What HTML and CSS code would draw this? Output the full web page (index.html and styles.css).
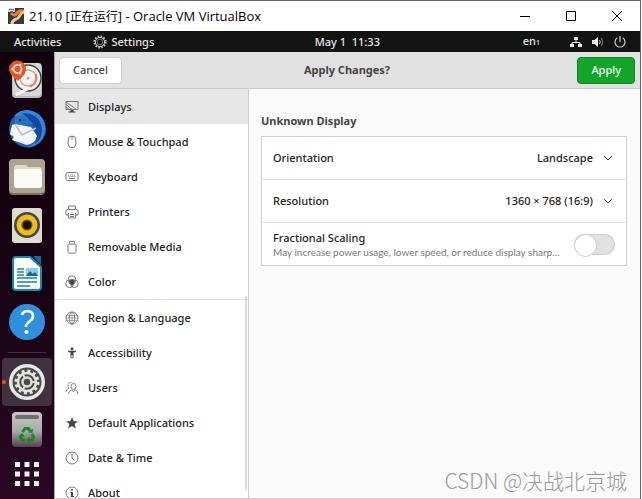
FILE: index.html
```html
<!DOCTYPE html>
<html lang="en">
<head>
<meta charset="utf-8">
<meta name="viewport" content="width=device-width, initial-scale=1">
<title>21.10 [正在运行] - Oracle VM VirtualBox</title>
<link rel="stylesheet" href="styles.css">
</head>
<body>
<div class="window">
  <header class="titlebar">
    <svg class="vm-icon" viewBox="0 0 16 16" aria-hidden="true"><path fill="#343746" d="M0 0h16v16H0z"/><path fill="#d9dbe0" d="M0 0h7v4H0z"/><path stroke="#777" d="M1 1.500h5M2 3.500h3"/><path fill="none" stroke="#ee7b32" stroke-width="3" d="M3 5c4 4 5 1 7-1 2-2 4-1 6-1"/><path fill="none" stroke="#ffc66b" stroke-width="3" d="M4 16c0-5 4-4 6-6s2-5 6-6"/></svg>
    <span class="title">21.10 [<span lang="zh">正在运行</span>] - Oracle VM VirtualBox</span>
    <div class="controls">
      <button type="button" aria-label="Minimize"><svg viewBox="0 0 12 12"><path d="M1 6.500h10"/></svg></button>
      <button type="button" aria-label="Maximize"><svg viewBox="0 0 12 12"><path d="M1.500 1.500h9v9h-9z"/></svg></button>
      <button type="button" aria-label="Close"><svg viewBox="0 0 12 12"><path d="M1 1l10 10M11 1L1 11"/></svg></button>
    </div>
  </header>

  <div class="topbar">
    <div class="top-left">
      <span>Activities</span>
      <span class="app-name"><svg class="gear" viewBox="0 0 14 14" aria-hidden="true"><circle cx="7" cy="7" r="5.600" stroke-width="2" stroke-dasharray="1.500 1.430"/><circle cx="7" cy="7" r="4.600"/><circle cx="7" cy="7" r="2.800" stroke="#777"/></svg>Settings</span>
    </div>
    <span>May 1&nbsp; 11:33</span>
    <div class="top-right">
      <span class="lang">en<small>1</small></span>
      <svg viewBox="0 0 12 12" aria-hidden="true"><path fill="#eee" d="M4 1h4v3H4zM0 8h4v3H0zM8 8h4v3H8z"/><path fill="none" stroke="#eee" d="M6 4v2M2 8V6.500h8V8"/></svg>
      <svg viewBox="0 0 12 12" aria-hidden="true"><path fill="#eee" d="M0 4h2.500L6 1v10L2.500 8H0z"/><path fill="none" stroke="#ccc" d="M7.500 4q1.500 2 0 4"/><path fill="none" stroke="#888" d="M9.500 2q2.500 4 0 8"/></svg>
      <svg viewBox="0 0 12 12" aria-hidden="true"><path fill="none" stroke="#ccc" stroke-width="1.200" d="M3.300 1.800a5 5 0 1 0 5.400 0M6 0v6"/></svg>
    </div>
  </div>

  <div class="desktop">
    <nav class="dock" aria-label="Dock">
      <a href="#" aria-label="Install Ubuntu"><svg viewBox="0 0 48 48"><rect x="10" y="7" width="30" height="35" rx="4" fill="#bdbdbd"/><rect x="11" y="7" width="28" height="33" rx="4" fill="#d6d6d6"/><circle cx="26" cy="22" r="13" fill="#f3f3f3" stroke="#444" stroke-width="1.500"/><circle cx="26" cy="22" r="8" fill="none" stroke="#d9a690" stroke-width="1.500"/><path d="M34 18q2 10-7 13" fill="none" stroke="#e58060" stroke-width="2"/><circle cx="26" cy="22" r="1.500" fill="#aaa"/><path d="M15 38l12-6" stroke="#fff" stroke-width="3" stroke-linecap="round"/><path d="M16 25C12 21 7 18 7 13a8.500 8.500 0 0 1 17 0c0 5-4 8-8 12z" fill="#e95420"/><circle cx="15.500" cy="13" r="4" fill="none" stroke="#fff" stroke-width="1.700"/><g fill="#fff" stroke="#e95420" stroke-width=".6"><circle cx="10.500" cy="13" r="1.600"/><circle cx="18" cy="8.800" r="1.600"/><circle cx="18" cy="17.200" r="1.600"/></g></svg></a>
      <a href="#" aria-label="Thunderbird"><svg viewBox="0 0 48 48"><circle cx="25.500" cy="24" r="18.500" fill="#1b5fad"/><path d="M12 11q5-6 13-6 18 2 18 20-2 15-17 18 12-8 9-22-6-10-17-9z" fill="#2e8bdc"/><path d="M20 8q19 0 20 17 0 9-7 14 4-17-7-25z" fill="#1748a1"/><path d="M13 12q6-4 12 0l6 7-18 3z" fill="#2673c8"/><path d="M10 20l3-1 16 3 6 9q-2 8-10 9L10 35l2-3-4-3z" fill="#f5f6f9"/><path d="M13 19l7 11 14-7" fill="none" stroke="#b8bdca" stroke-width="1.500"/><circle cx="18" cy="15" r="1.200" fill="#422"/></svg></a>
      <a href="#" aria-label="Files"><svg viewBox="0 0 48 48"><rect x="7" y="7" width="36" height="35" rx="4" fill="#777361"/><rect x="7" y="6" width="36" height="34" rx="4" fill="#aaa491"/><path d="M12 15q0-3 3-3h8q2 0 3 2h11q3 0 3 3v15q0 3-3 3H15q-3 0-3-3z" fill="#dfdace"/><rect x="12" y="16" width="28" height="19" rx="3" fill="#fbfaf6"/></svg></a>
      <a href="#" aria-label="Rhythmbox"><svg viewBox="0 0 48 48"><rect x="10" y="6" width="30" height="35" rx="3" fill="#dfdccf"/><circle cx="25" cy="23" r="13" fill="#45484a"/><circle cx="25" cy="23" r="10.500" fill="#f3bb16"/><circle cx="25" cy="23" r="5.500" fill="#64501a"/><circle cx="25" cy="23" r="4" fill="#111"/></svg></a>
      <a href="#" aria-label="LibreOffice Writer"><svg viewBox="0 0 48 48"><path d="M14 7h14l11 10v20q0 3-3 3H14q-3 0-3-3V10q0-3 3-3z" fill="#fff" stroke="#1786bd" stroke-width="2"/><path d="M31 6h8v9z" fill="#116c9d"/><path d="M15 19h7M15 22h7M15 25h7M15 28h20M15 32h20M15 36h13" stroke="#1c7dac" stroke-width="1.500"/><rect x="24" y="18" width="12" height="8" fill="#8acbea"/><path d="M24 26l4-5 3 3 2-2 3 4z" fill="#16679c"/></svg></a>
      <a href="#" aria-label="Help"><svg viewBox="0 0 48 48"><circle cx="25" cy="23" r="18" fill="#2d8fdd"/><path d="M20 16q1-4 6-4 5 1 5 5 0 3-3 5-4 3-4 6" fill="none" stroke="#fff" stroke-width="2.700"/><circle cx="24.500" cy="33" r="2" fill="#fff"/></svg></a>
      <hr>
      <a href="#" class="active" aria-label="Settings"><svg viewBox="0 0 48 48"><circle cx="25" cy="24" r="18" fill="#e8e8e6"/><circle cx="25" cy="24" r="14.500" fill="#4b4b4a"/><circle cx="25" cy="24" r="10.500" fill="none" stroke="#e4e4e2" stroke-width="4" stroke-dasharray="2.800 2.700"/><circle cx="25" cy="24" r="9" fill="#4b4b4a" stroke="#e4e4e2" stroke-width="2.500"/><circle cx="25" cy="24" r="4.500" fill="none" stroke="#deded9" stroke-width="2.500"/><path d="M29 24h6M23 20l-3-5M23 28l-3 5" stroke="#deded9" stroke-width="2"/></svg></a>
      <a href="#" aria-label="Trash"><svg viewBox="0 0 48 48"><defs><linearGradient id="bin" x2="0" y2="1"><stop stop-color="#c8c8c8"/><stop offset=".55" stop-color="#a9a9a9"/><stop offset="1" stop-color="#51434f"/></linearGradient></defs><rect x="10" y="6" width="30" height="35" rx="4" fill="url(#bin)"/><rect x="13" y="9" width="24" height="4" rx="2" fill="#6e6e6e"/><g fill="none" stroke="#168b1d" stroke-width="3"><path d="M20.500 26l2.500-3.500h3.500l1.500 2.500"/><path d="M30 28l1.500 3-1.500 3h-3.500"/><path d="M23 34h-3l-1.500-3 1-2"/></g><path d="M26 26.500l4.500.5.500-4.500zM27.500 31v6l-3.500-3zM17 29.500l3.500-2.500 2 4z" fill="#168b1d"/></svg></a>
      <a href="#" class="apps" aria-label="Show applications"><svg viewBox="0 0 48 48"><path fill="#f5f3f5" d="M13 12h5v5h-5zM22.500 12h5v5h-5zM32 12h5v5h-5zM13 21.500h5v5h-5zM22.500 21.500h5v5h-5zM32 21.500h5v5h-5zM13 31h5v5h-5zM22.500 31h5v5h-5zM32 31h5v5h-5z"/></svg></a>
    </nav>

    <main class="settings">
      <div class="headerbar">
        <button type="button" class="btn">Cancel</button>
        <h1>Apply Changes?</h1>
        <button type="button" class="btn apply">Apply</button>
      </div>
      <div class="body">
        <nav class="sidebar" aria-label="Settings panels">
          <a href="#" class="selected"><svg viewBox="0 0 14 14"><path d="M1 1.500h12v8H1zM1 2l10 7M1 4.500l6 5M1 7l3 2.500"/><path fill="#444" d="M5.500 10h3v1.500h2v1h-7v-1h2z" stroke="none"/></svg>Displays</a>
          <a href="#"><svg viewBox="0 0 14 14"><path d="M3.500 4q0-3 3.500-3t3.500 3l.5 4q0 4.500-4 4.500T3 8zM7 1v4"/></svg>Mouse &amp; Touchpad</a>
          <a href="#"><svg viewBox="0 0 14 14"><rect x="1" y="2.500" width="12" height="8" rx="1.500"/><path stroke-dasharray="1 1" d="M3 5h8M3.500 6.500h7"/><path d="M4 8.500h6"/></svg>Keyboard</a>
          <a href="#"><svg viewBox="0 0 14 14"><path d="M3.500 4V1h7v3M3 10H1V6q0-1.500 1.500-1.500h9Q13 4.500 13 6v4h-2M3.500 8v5h7V8M5 9.500h4M5 11.500h4"/></svg>Printers</a>
          <a href="#"><svg viewBox="0 0 14 14"><path d="M4.500 3.500v-2h5v2"/><rect x="3" y="4" width="8" height="9" rx="1.500"/></svg>Removable Media</a>
          <a href="#"><svg viewBox="0 0 14 14"><circle cx="7" cy="4.700" r="3.900"/><circle cx="4.700" cy="8.700" r="3.900"/><circle cx="9.300" cy="8.700" r="3.900"/><path fill="#444" d="M4 5.500q3-2 6 0 .5 3-3 5-3.500-2-3-5z"/></svg>Color</a>
          <a href="#" class="section"><svg viewBox="0 0 14 14"><circle cx="7" cy="7" r="6"/><ellipse cx="7" cy="7" rx="2.800" ry="6"/><path d="M1.500 4.500h11M1 7h12M1.500 9.500h11M7 1v12" stroke-width=".6"/></svg>Region &amp; Language</a>
          <a href="#"><svg viewBox="0 0 14 14"><g fill="#444" stroke="none"><circle cx="7" cy="2.700" r="1.500"/><path d="M3 4.700h8V6l-2.500.5V12.500h-1V9h-1v3.500h-1v-6L3 6z"/></g></svg>Accessibility</a>
          <a href="#"><svg viewBox="0 0 14 14"><path stroke="#999" d="M1 11q0-3 3-3.500Q2.500 6 3 3.500 4 1 6.500 1.500"/><ellipse cx="8.500" cy="5.500" rx="2.500" ry="3"/><path d="M3.500 13q0-3 3-4l2 1.500 2-1.500q2.500 1 2.500 4"/></svg>Users</a>
          <a href="#"><svg viewBox="0 0 14 14"><path fill="#444" stroke="none" d="M7 1l1.700 4.200H13L9.700 8l1.200 4.500L7 9.900l-3.900 2.600L4.300 8 1 5.200h4.300z"/></svg>Default Applications</a>
          <a href="#"><svg viewBox="0 0 14 14"><circle cx="7" cy="7" r="6"/><path d="M7 3v4l2.500 2.500"/></svg>Date &amp; Time</a>
          <a href="#"><svg viewBox="0 0 14 14"><circle cx="7" cy="7" r="6"/><path fill="#444" stroke="none" d="M6 3h2v1.600H6zM5.500 6H8v4h1v1H5.500v-1H6V7h-.5z"/></svg>About</a>
          <span class="scrollbar"></span>
        </nav>
        <section class="content">
          <h2>Unknown Display</h2>
          <div class="card">
            <div class="row">
              <label for="orientation">Orientation</label>
              <select id="orientation"><option>Landscape</option></select>
              <svg class="chevron" viewBox="0 0 10 10" aria-hidden="true"><path d="M1 3l4 4 4-4"/></svg>
            </div>
            <div class="row">
              <label for="resolution">Resolution</label>
              <select id="resolution"><option>1360 × 768 (16:9)</option></select>
              <svg class="chevron" viewBox="0 0 10 10" aria-hidden="true"><path d="M1 3l4 4 4-4"/></svg>
            </div>
            <div class="row">
              <label for="scaling">Fractional Scaling<small>May increase power usage, lower speed, or reduce display sharp…</small></label>
              <input id="scaling" type="checkbox" class="switch">
            </div>
          </div>
        </section>
      </div>
    </main>
  </div>
  <span class="watermark">CSDN @决战北京城</span>
</div>
</body>
</html>
```
FILE: styles.css
```css
* { box-sizing: border-box; }

body {
  margin: 0;
  background: #f4f4f4;
  color: #222;
  font: 500 11px/16px "Noto Sans", "Noto Sans CJK SC", sans-serif;
}

button, select { font: inherit; color: inherit; }
a { color: inherit; text-decoration: none; }
svg { display: block; flex: none; }

.window {
  position: relative;
  display: flex;
  flex-direction: column;
  height: 100vh;
  margin-right: 1px;
  border: solid #666;
  border-width: 1px 1px 0 0;
  overflow: hidden;
}

.titlebar {
  display: flex;
  align-items: center;
  flex: none;
  height: 30px;
  padding-left: 8px;
  gap: 5px;
  background: #fff;
  color: #000;
  font: 400 13px/16px "Open Sans", "Noto Sans CJK SC", sans-serif;
}
.title [lang="zh"] { font-size: 12px; }
.vm-icon { width: 16px; height: 16px; }
.controls { display: flex; margin-left: auto; }
.controls button {
  display: grid;
  place-items: center;
  width: 46px;
  height: 28px;
  padding: 0;
  border: 0;
  background: none;
}
.controls svg { width: 12px; height: 12px; fill: none; stroke: #000; }

.topbar {
  display: grid;
  grid-template-columns: 11fr auto 9fr;
  align-items: center;
  flex: none;
  height: 21px;
  padding: 0 14px;
  background: #131313;
  color: #e4e4e4;
}
.top-left, .top-right, .app-name { display: flex; align-items: center; }
.top-left { gap: 32px; }
.app-name { gap: 4px; }
.gear { width: 14px; height: 14px; fill: none; stroke: #ccc; }
.top-right { justify-content: flex-end; gap: 10px; }
.top-right svg { width: 12px; height: 12px; }
.lang { margin-right: 20px; }
.lang small { font-size: 7px; }

.desktop { display: flex; flex: 1; min-height: 0; }

.dock {
  flex: none;
  width: 54px;
  padding: 4px 2px 0;
  background: linear-gradient(#12020f, #180414 55%, #2b0722);
  overflow: hidden;
}
.dock a {
  display: block;
  position: relative;
  height: 48px;
  margin-bottom: 1px;
  padding-right: 2px;
  border-radius: 4px;
}
.dock svg { width: 48px; height: 48px; }
.dock a:nth-child(2n) { margin-bottom: 0; }
.dock hr { width: 38px; margin: 5px 6px 5px; border: 0; border-top: 1px solid #42303e; }
.dock .active { background: #413240; }
.dock .active::before {
  content: "";
  position: absolute;
  left: 0;
  top: 22px;
  width: 4px;
  height: 4px;
  border-radius: 50%;
  background: #e95420;
}
.dock .apps { margin-top: -5px; }

.settings {
  display: flex;
  flex-direction: column;
  flex: 1;
  min-width: 0;
  border-left: 1px solid #aaa3a9;
  border-bottom: 1px solid #ccc;
  background: #fafafa;
}
.headerbar {
  display: grid;
  grid-template-columns: 1fr auto 1fr;
  align-items: center;
  flex: none;
  height: 37px;
  padding: 0 5px 0 4px;
  border-bottom: 1px solid #cbcbcb;
  background: #e1e1e1;
}
h1, h2 { margin: 0; font-size: 11px; line-height: 16px; font-weight: 700; color: #444; }
.btn {
  justify-self: start;
  height: 27px;
  padding: 0 13px;
  border: 1px solid #cdcdcd;
  border-radius: 4px;
  background: #fff;
  color: #444;
}
.apply {
  justify-self: end;
  border-color: #0d8420;
  background: #12a52a;
  color: #f3fff4;
}

.body { display: flex; flex: 1; min-height: 0; }
.sidebar {
  position: relative;
  flex: none;
  width: 194px;
  border-right: 1px solid #d0d0d0;
  background: #fff;
  overflow: hidden;
}
.sidebar a {
  display: flex;
  align-items: center;
  gap: 9px;
  height: 35px;
  padding-left: 10px;
}
.sidebar svg { width: 14px; height: 14px; fill: none; stroke: #777; }
.sidebar .selected { background: #e7e7e7; }
.sidebar .section { height: 36px; border-top: 1px solid #dedede; }
.scrollbar {
  position: absolute;
  right: 1px;
  top: 207px;
  bottom: 8px;
  width: 2px;
  border-radius: 1px;
  background: #d6d6d6;
}

.content { flex: 1; min-width: 0; padding: 24px 13px 0 12px; }
.card { margin-top: 7px; border: 1px solid #d2d2d2; background: #fff; }
.row {
  display: flex;
  align-items: center;
  gap: 10px;
  height: 43px;
  padding: 0 11px;
  border-bottom: 1px solid #e2e2e2;
}
.row:last-child { height: 42px; border-bottom: 0; }
.row label { flex: 1; min-width: 0; }
.row small {
  display: block;
  font: 400 10px/12px Lato, sans-serif;
  color: #777;
  white-space: nowrap;
}
.row select {
  padding: 0;
  border: 0;
  background: none;
  appearance: none;
  text-align-last: right;
}
.chevron { width: 10px; height: 10px; margin-right: 2px; fill: none; stroke: #444; }
.switch {
  display: flex;
  flex: none;
  appearance: none;
  width: 41px;
  height: 21px;
  margin: 0;
  border-radius: 11px;
  background: #e1e1e1;
  box-shadow: inset 0 0 0 1px #cdcdcd;
}
.switch::before {
  content: "";
  width: 21px;
  height: 21px;
  border: 1px solid #cdcdcd;
  border-radius: 50%;
  background: #fff;
}

.watermark {
  position: absolute;
  right: 13px;
  bottom: 7px;
  color: #999;
  font: 300 21px/24px "Noto Sans CJK SC", sans-serif;
}
```
